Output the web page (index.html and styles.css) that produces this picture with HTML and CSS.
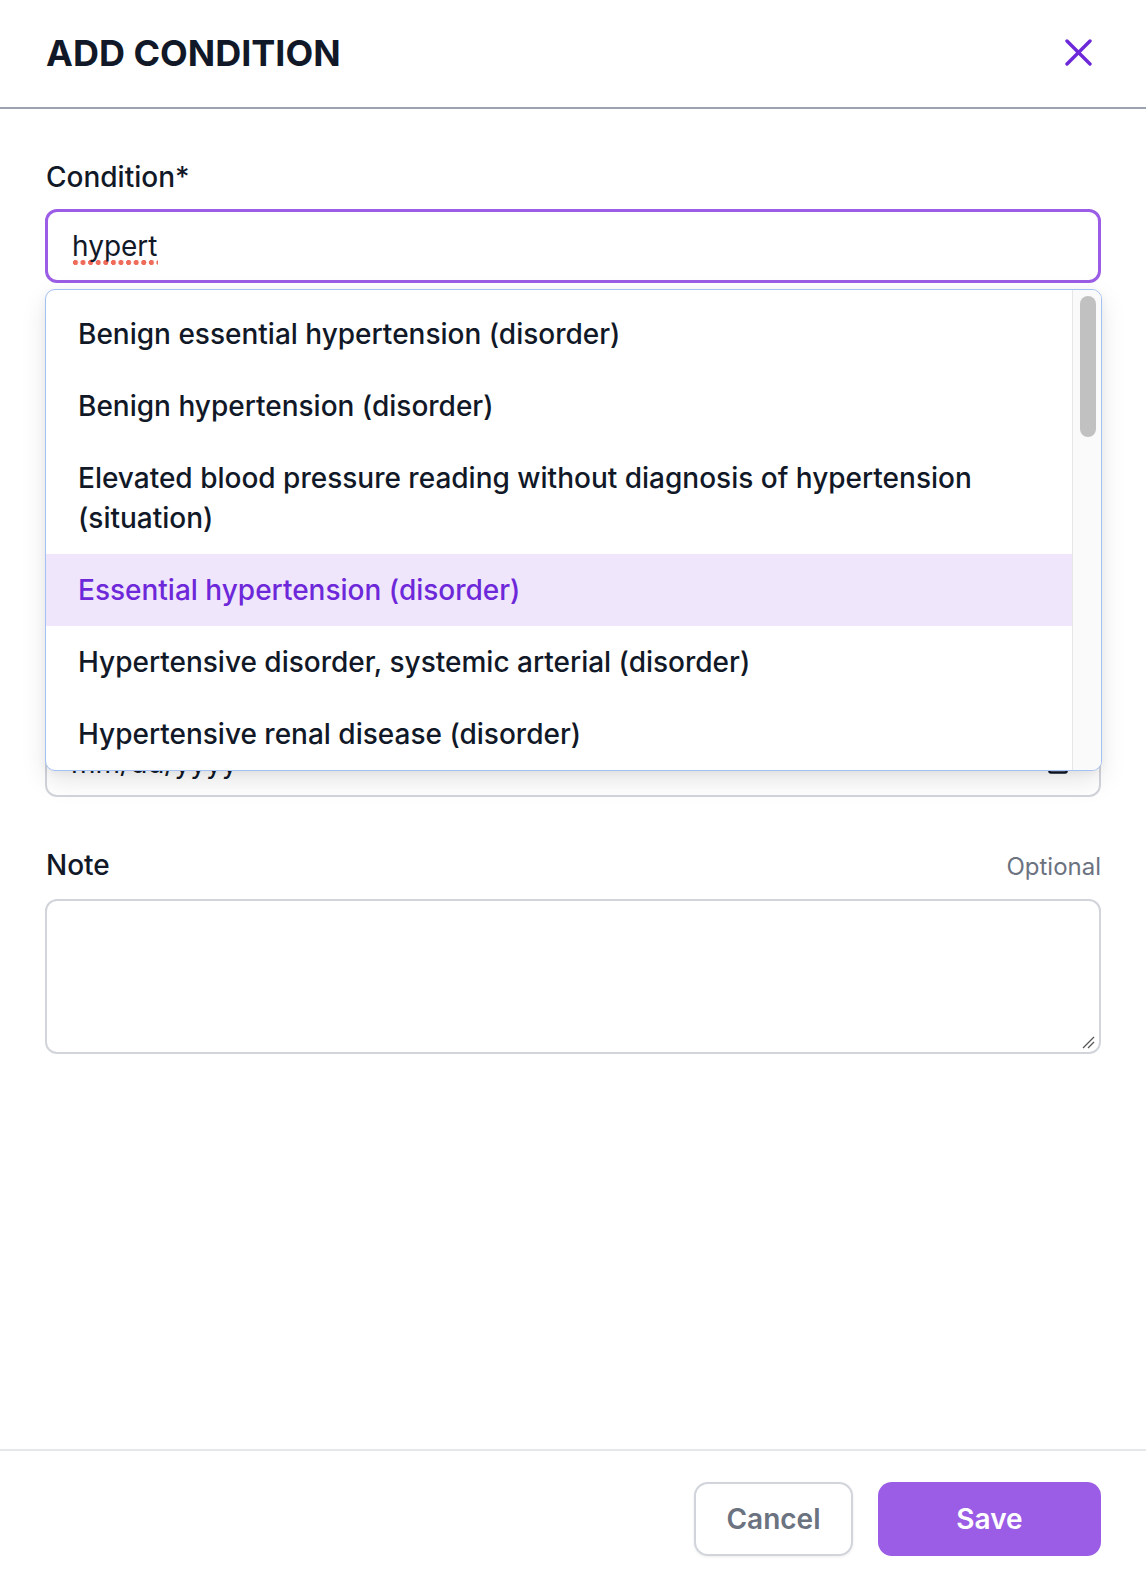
FILE: index.html
```html
<!DOCTYPE html>
<html lang="en">
<head>
<meta charset="utf-8">
<title>Add condition</title>
<link rel="stylesheet" href="styles.css">
</head>
<body>
<div class="modal">
  <header class="modal-header">
    <h1 class="modal-title">ADD CONDITION</h1>
    <button class="close-btn" type="button" aria-label="Close">
      <svg width="27" height="27" viewBox="0 0 27 27" fill="none" stroke="#6d28d9" stroke-width="3.4" stroke-linecap="round">
        <line x1="2" y1="2" x2="25" y2="25"/>
        <line x1="25" y1="2" x2="2" y2="25"/>
      </svg>
    </button>
  </header>

  <main class="modal-body">
    <div class="field">
      <div class="label-row"><span class="field-label">Condition*</span></div>
      <div class="combo">
        <div class="text-input focused"><span class="typed">hypert</span></div>
        <div class="dropdown">
          <ul class="options">
            <li class="option">Benign essential hypertension (disorder)</li>
            <li class="option">Benign hypertension (disorder)</li>
            <li class="option">Elevated blood pressure reading without diagnosis of hypertension (situation)</li>
            <li class="option active">Essential hypertension (disorder)</li>
            <li class="option">Hypertensive disorder, systemic arterial (disorder)</li>
            <li class="option">Hypertensive renal disease (disorder)</li>
          </ul>
          <div class="scrollbar"><div class="thumb"></div></div>
        </div>
      </div>
    </div>

    <div class="field covered">
      <div class="label-row"><span class="field-label">Clinical status</span></div>
      <div class="text-input short">Active</div>
    </div>

    <div class="field covered">
      <div class="label-row"><span class="field-label">Verification status</span></div>
      <div class="text-input short">Confirmed</div>
    </div>

    <div class="field">
      <div class="label-row covered"><span class="field-label">Onset date</span></div>
      <div class="text-input date-input">
        <span class="date-placeholder">mm/dd/yyyy</span>
        <svg class="cal-icon" width="20" height="22" viewBox="0 0 20 22" fill="none" stroke="#111827" stroke-width="2.6">
          <rect x="1.5" y="3.5" width="17" height="17" rx="1.5"/>
          <line x1="1.5" y1="8.5" x2="18.5" y2="8.5"/>
          <line x1="6" y1="0.5" x2="6" y2="4"/>
          <line x1="14" y1="0.5" x2="14" y2="4"/>
        </svg>
      </div>
    </div>

    <div class="field">
      <div class="label-row">
        <span class="field-label">Note</span>
        <span class="optional">Optional</span>
      </div>
      <div class="textarea-wrap">
        <textarea class="textarea"></textarea>
        <svg class="resize-grip" width="14" height="14" viewBox="0 0 14 14" stroke="#555" stroke-width="1.2">
          <line x1="13" y1="2" x2="2" y2="13"/>
          <line x1="13" y1="7" x2="7" y2="13"/>
        </svg>
      </div>
    </div>
  </main>

  <footer class="modal-footer">
    <button class="btn btn-cancel" type="button">Cancel</button>
    <button class="btn btn-save" type="button">Save</button>
  </footer>
</div>
</body>
</html>
```

FILE: styles.css
```css
* { box-sizing: border-box; }

html, body {
  margin: 0;
  padding: 0;
  background: #ffffff;
}

body {
  font-family: Inter, "Noto Sans", "Liberation Sans", sans-serif;
  color: #111827;
}

.modal {
  display: flex;
  flex-direction: column;
  height: 100vh;
  width: 100%;
  overflow: hidden;
}

.modal-header {
  height: 109px;
  flex: 0 0 auto;
  display: flex;
  align-items: center;
  justify-content: space-between;
  padding: 0 45px 0 46px;
  border-bottom: 2px solid #9ca3af;
}

.modal-title {
  margin: 0 0 2px;
  font-size: 36px;
  font-weight: 700;
  color: #111827;
  line-height: normal;
}

.close-btn {
  border: 0;
  background: transparent;
  padding: 0;
  margin: 0 9px 2px 0;
  width: 27px;
  height: 27px;
  display: flex;
  cursor: pointer;
}

.modal-body {
  flex: 1 1 auto;
  min-height: 0;
  padding: 48px 45px 0;
  display: flex;
  flex-direction: column;
  gap: 48px;
}

.field {
  display: flex;
  flex-direction: column;
}

.covered {
  visibility: hidden;
}

.label-row {
  display: flex;
  justify-content: space-between;
  align-items: baseline;
  margin-bottom: 12px;
}

.field-label {
  font-size: 28px;
  line-height: 40px;
  font-weight: 500;
  color: #111827;
  padding-left: 1px;
}

.optional {
  font-size: 24px;
  line-height: 40px;
  color: #6b7280;
}

.combo {
  position: relative;
}

.text-input {
  height: 74px;
  border: 2px solid #d1d5db;
  border-radius: 12px;
  padding: 0 24px;
  display: flex;
  align-items: center;
  font-size: 28px;
  color: #111827;
  background: #fff;
}

.text-input.short {
  height: 70px;
}

.text-input.focused {
  border: 3px solid #9b5de5;
  padding-left: 24px;
}

.typed {
  display: inline-block;
  line-height: 34px;
  padding-bottom: 3px;
  margin-top: 2px;
  background-image: radial-gradient(circle at 3.5px 3.5px, #ef6b5a 2.4px, transparent 2.8px);
  background-size: 7.6px 7px;
  background-repeat: repeat-x;
  background-position: 0 100%;
}

.dropdown {
  position: absolute;
  top: calc(100% + 6px);
  left: 0;
  width: 1057px;
  height: 482px;
  background: #fff;
  border: 1px solid #a4c0f4;
  border-radius: 10px;
  box-shadow: 0 10px 26px rgba(0, 0, 0, 0.10), 0 2px 8px rgba(0, 0, 0, 0.05);
  display: flex;
  overflow: hidden;
  z-index: 5;
}

.options {
  flex: 1 1 auto;
  list-style: none;
  margin: 0;
  padding: 8px 0 0;
  overflow: hidden;
}

.option {
  padding: 16px 40px 16px 32px;
  font-size: 28px;
  line-height: 40px;
  font-weight: 500;
  color: #111827;
}

.option.active {
  background: #f0e6fc;
  color: #6d28d9;
}

.scrollbar {
  flex: 0 0 29px;
  background: #fafafa;
  border-left: 1px solid #e6e6e6;
  padding: 6px 0 0 7px;
}

.thumb {
  width: 16px;
  height: 141px;
  border-radius: 8px;
  background: #c1c1c1;
}

.date-input {
  justify-content: space-between;
  padding-right: 31px;
  padding-top: 6px;
}

.date-placeholder {
  color: #111827;
}

.cal-icon {
  display: block;
}

.textarea-wrap {
  position: relative;
}

.textarea {
  display: block;
  width: 100%;
  height: 155px;
  border: 2px solid #d1d5db;
  border-radius: 12px;
  resize: none;
  font-family: inherit;
  font-size: 28px;
  padding: 16px 24px;
  outline: none;
}

.resize-grip {
  position: absolute;
  right: 6px;
  bottom: 5px;
}

.modal-footer {
  flex: 0 0 137px;
  border-top: 2px solid #e5e7eb;
  padding: 31px 45px 0;
  display: flex;
  justify-content: flex-end;
  align-items: flex-start;
  gap: 25px;
}

.btn {
  height: 74px;
  border-radius: 14px;
  font-family: inherit;
  font-size: 28px;
  font-weight: 600;
  cursor: pointer;
}

.btn-cancel {
  width: 159px;
  background: #fff;
  border: 2px solid #d1d5db;
  color: #6b7280;
  box-shadow: 0 1px 3px rgba(0, 0, 0, 0.08);
}

.btn-save {
  width: 223px;
  background: #9b5de5;
  border: 0;
  color: #fff;
}
```
